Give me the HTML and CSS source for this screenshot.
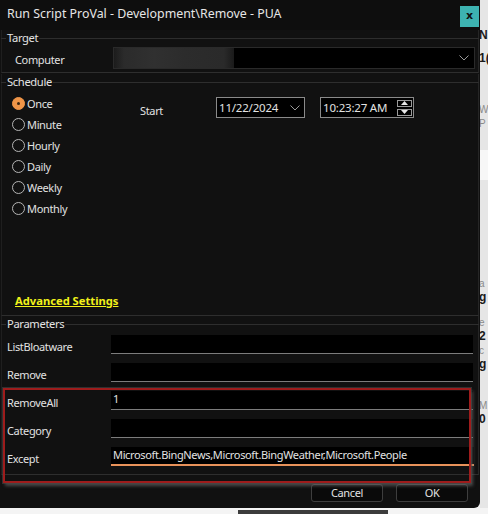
FILE: index.html
```html
<!DOCTYPE html>
<html>
<head>
<meta charset="utf-8">
<link rel="stylesheet" href="styles.css">
</head>
<body>
<div class="screen">
  <div class="top">
    <div class="dialog">
      <div class="titlebar">
        <span class="title">Run Script ProVal - Development\Remove - PUA</span>
        <div class="close">x</div>
      </div>

      <div class="group target">
        <div class="ghead"><span>Target</span></div>
        <div class="comp-row">
          <span class="comp-lbl">Computer</span>
          <div class="combo">
            <div class="blur"></div>
            <svg class="chev" width="10" height="6" viewBox="0 0 10 6"><polyline points="0.5,0.5 5,5 9.5,0.5" fill="none" stroke="#9a9a9a" stroke-width="1"/></svg>
          </div>
        </div>
      </div>

      <div class="group schedule">
        <div class="ghead"><span>Schedule</span></div>
        <div class="sched-body">
          <div class="radios">
            <div class="radio"><span class="dot on"></span>Once</div>
            <div class="radio"><span class="dot"></span>Minute</div>
            <div class="radio"><span class="dot"></span>Hourly</div>
            <div class="radio"><span class="dot"></span>Daily</div>
            <div class="radio"><span class="dot"></span>Weekly</div>
            <div class="radio"><span class="dot"></span>Monthly</div>
          </div>
          <div class="start">Start</div>
          <div class="picker date">
            <span>11/22/2024</span>
            <svg class="dchev" width="10" height="6" viewBox="0 0 10 6"><polyline points="0.5,0.5 5,5 9.5,0.5" fill="none" stroke="#9a9a9a" stroke-width="1"/></svg>
          </div>
          <div class="picker time">
            <span>10:23:27 AM</span>
            <div class="spin">
              <div class="sbtn"><svg width="7" height="4" viewBox="0 0 7 4"><polygon points="3.5,0 7,4 0,4" fill="#e8e8e8"/></svg></div>
              <div class="sbtn"><svg width="7" height="4" viewBox="0 0 7 4"><polygon points="0,0 7,0 3.5,4" fill="#e8e8e8"/></svg></div>
            </div>
          </div>
        </div>
        <div class="adv">Advanced Settings</div>
      </div>

      <div class="group params">
        <div class="ghead"><span>Parameters</span></div>
        <div class="prow"><span class="plbl">ListBloatware</span><div class="pinput"></div></div>
        <div class="prow"><span class="plbl">Remove</span><div class="pinput"></div></div>
        <div class="prow"><span class="plbl">RemoveAll</span><div class="pinput">1</div></div>
        <div class="prow"><span class="plbl">Category</span><div class="pinput"></div></div>
        <div class="prow"><span class="plbl">Except</span><div class="pinput focus">Microsoft.BingNews,Microsoft.BingWeather,Microsoft.People</div></div>
      </div>

      <div class="buttons">
        <div class="btn">Cancel</div>
        <div class="btn">OK</div>
      </div>

      <div class="annot"></div>
    </div>
    <div class="side">
      <div class="frag f1"><b>N</b></div>
      <div class="frag f2"><b>1(</b></div>
      <div class="frag f3 light">W</div>
      <div class="frag f4 light">P</div>
      <div class="whiteband"></div>
      <div class="frag f5 light">a</div>
      <div class="frag f6"><b>g</b></div>
      <div class="frag f7 light">e</div>
      <div class="frag f8"><b>2</b></div>
      <div class="frag f9 light">c</div>
      <div class="frag f10"><b>g</b></div>
      <div class="frag f11 light">M</div>
      <div class="frag f12"><b>0</b></div>
    </div>
  </div>
  <div class="bottom"><div class="bar"></div></div>
</div>
</body>
</html>
```

FILE: styles.css
```css
* { box-sizing: border-box; }
html, body { margin: 0; padding: 0; }
body {
  width: 488px;
  height: 514px;
  overflow: hidden;
  background: #f2f2f2;
  font-family: "Noto Sans", "Open Sans", sans-serif;
  font-size: 11px;
  letter-spacing: -0.35px;
  color: #e2e2e2;
}
.screen { width: 488px; height: 514px; display: flex; flex-direction: column; }
.top { display: flex; height: 508px; }
.dialog {
  position: relative;
  width: 480px;
  height: 508px;
  background: #111111;
  border-bottom-right-radius: 6px;
  display: flex;
  flex-direction: column;
}
.titlebar {
  height: 30px;
  display: flex;
  align-items: flex-start;
  background: #0e0e0e;
}
.title {
  font-size: 12.4px;
  letter-spacing: 0;
  color: #e6e6e6;
  padding-left: 7px;
  line-height: 28px;
  flex: 1;
}
.close {
  width: 19px;
  height: 21px;
  margin-top: 6px;
  margin-right: 1px;
  background: #3db3b1;
  color: #111;
  font-weight: bold;
  font-size: 11px;
  letter-spacing: 0;
  line-height: 19px;
  text-align: center;
  font-family: "DejaVu Sans", sans-serif;
}

.group {
  margin: 0 1px;
  border-left: 1px solid #1f1f1f;
  border-right: 1px solid #262626;
  border-bottom: 1px solid #2e2e2e;
}
.ghead {
  height: 16px;
  display: flex;
  align-items: center;
  margin-left: -1px;
  margin-right: -1px;
}
.ghead::before {
  content: "";
  width: 5px;
  height: 1px;
  background: #2e2e2e;
}
.ghead::after {
  content: "";
  flex: 1;
  height: 1px;
  background: #2e2e2e;
}
.ghead span {
  padding: 0 1px;
  font-size: 11.2px;
  line-height: 16px;
  color: #e4e4e4;
}

.target { padding-bottom: 3px; }
.comp-row {
  display: flex;
  align-items: center;
  margin-top: 1px;
  height: 22px;
}
.comp-lbl { width: 111px; padding-left: 13px; padding-top: 3px; }
.combo {
  width: 362px;
  height: 22px;
  background: #000;
  border: 1px solid #2a2a2a;
  display: flex;
  align-items: center;
}
.blur {
  width: 120px;
  height: 20px;
  background: linear-gradient(90deg, #1c1c1c 0px, #2b2b2b 10px, #303030 40px, #2c2c2c 70px, #2a2a2a 110px, #1a1a1a 120px);
}
.chev { margin-left: auto; margin-right: 5px; }

.schedule { margin-top: 1px; padding-bottom: 6px; }
.sched-body { display: flex; align-items: flex-start; padding-top: 3px; }
.radios { width: 137px; padding-left: 10px; display: flex; flex-direction: column; }
.radio {
  height: 21px;
  display: flex;
  align-items: center;
}
.dot {
  width: 13px;
  height: 13px;
  border-radius: 50%;
  border: 1px solid #b5b5b5;
  margin-right: 2px;
  position: relative;
}
.dot.on { background: #ef9548; border-color: #ef9548; }
.dot.on::after {
  content: "";
  position: absolute;
  left: 4px; top: 4px;
  width: 3px; height: 3px;
  border-radius: 50%;
  background: #3a2410;
}
.start { width: 77px; margin-top: 10px; padding-left: 1px; }
.picker {
  height: 21px;
  margin-top: 4px;
  border: 1px solid #8a8a8a;
  background: #000;
  display: flex;
  align-items: center;
  padding-left: 2px;
  font-size: 11.5px;
  letter-spacing: -0.2px;
}
.date { width: 89px; }
.dchev { margin-left: auto; margin-right: 4px; }
.time { width: 94px; margin-left: 15px; }
.spin { margin-left: auto; margin-right: 1px; display: flex; flex-direction: column; gap: 2px; }
.sbtn {
  width: 15px;
  height: 7px;
  border: 1px solid #9a9a9a;
  display: flex;
  align-items: center;
  justify-content: center;
}
.adv {
  margin-top: 74px;
  margin-left: 13px;
  color: #f2f21a;
  font-weight: bold;
  text-decoration: underline;
  font-size: 11.2px;
  letter-spacing: 0;
  line-height: 16px;
}

.params { padding-top: 0; padding-bottom: 8px; }
.params .ghead { margin-bottom: 3px; }
.prow { display: flex; align-items: center; height: 19px; margin-bottom: 9px; }
.prow:last-child { margin-bottom: 0; }
.plbl { width: 109px; padding-left: 5px; padding-top: 3px; }
.pinput {
  width: 362px;
  height: 19px;
  background: #000;
  border-bottom: 1px solid #7c7c7c;
  padding-left: 2px;
  line-height: 15px;
}
.pinput.focus { border-bottom: 2px solid #e8925a; width: 363px; }

.buttons {
  display: flex;
  justify-content: flex-end;
  gap: 13px;
  margin-top: 9px;
  padding-right: 12px;
}
.btn {
  width: 72px;
  height: 18px;
  border: 1px solid #3e3e3e;
  border-radius: 3px;
  background: #0a0a0a;
  text-align: center;
  line-height: 16px;
}

.annot {
  position: absolute;
  left: 3px;
  top: 388px;
  width: 468px;
  height: 95px;
  border: 2px solid #9e1c1c;
  box-shadow: 0 0 0 1px rgba(70,70,70,0.6), 2px 3px 3px rgba(110,110,110,0.6);
  pointer-events: none;
}

.side {
  width: 8px;
  height: 508px;
  background: #e6e6e6;
  overflow: hidden;
  display: flex;
  flex-direction: column;
  font-family: "Liberation Sans", sans-serif;
  letter-spacing: 0;
  color: #1a1a1a;
  font-size: 12px;
  line-height: 14px;
}
.frag { white-space: nowrap; margin-left: -1px; height: 14px; flex: none; }
.frag.light { color: #8a8a8a; font-size: 10px; line-height: 13px; height: 13px; }
.f1 { margin-top: 28px; }
.f2 { margin-top: 9px; }
.f3 { margin-top: 38px; }
.f4 { margin-top: 1px; }
.whiteband { height: 30px; margin-top: 20px; background: #f7f7f7; margin-left: -2px; flex: none; }
.f5 { margin-top: 97px; }
.f6 { margin-top: 0; }
.f7 { margin-top: 12px; }
.f8 { margin-top: 0; }
.f9 { margin-top: 1px; }
.f10 { margin-top: 0; }
.f11 { margin-top: 28px; }
.f12 { margin-top: 0; }

.bottom {
  height: 6px;
  background: #f4f4f4;
}
.bar {
  margin-left: 238px;
  margin-top: 2px;
  width: 150px;
  height: 4px;
  background: #3c3c3c;
}
```
